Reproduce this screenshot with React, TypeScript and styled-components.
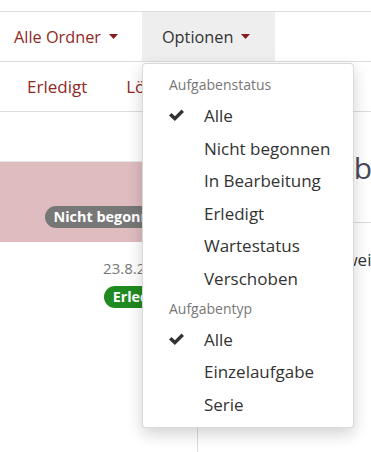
import React from 'react';
import styled, { createGlobalStyle } from 'styled-components';

const GlobalStyle = createGlobalStyle`
  html, body {
    margin: 0;
    padding: 0;
    background: #fff;
  }
  body {
    font-family: "Open Sans", "Noto Sans", sans-serif;
    color: #333;
    overflow: hidden;
  }
`;

const statusItems = ['Alle', 'Nicht begonnen', 'In Bearbeitung', 'Erledigt', 'Wartestatus', 'Verschoben'];
const typeItems = ['Alle', 'Einzelaufgabe', 'Serie'];

const Check = () => (
  <svg width="15" height="12" viewBox="0 0 15 12">
    <polygon points="0,6.6 2.5,4.1 5.9,7.3 12.5,0.6 15,3.1 5.9,12" fill="#333" />
  </svg>
);

const Caret = () => (
  <svg width="9" height="5" viewBox="0 0 9 5">
    <polygon points="0,0 9,0 4.5,5" fill="#8b1a1a" />
  </svg>
);

const App = () => {
  return (
    <Page>
      <GlobalStyle />
      <TopStrip />
      <Nav>
        <NavItem $first>
          <NavLabel $tone="red">Alle Ordner</NavLabel>
          <Caret />
        </NavItem>
        <NavItem $active>
          <NavLabel>Optionen</NavLabel>
          <Caret />
          <Menu>
            <MenuHeader>Aufgabenstatus</MenuHeader>
            {statusItems.map((s, i) => (
              <MenuItem key={s}>
                <CheckSlot>{i === 0 && <Check />}</CheckSlot>
                {s}
              </MenuItem>
            ))}
            <MenuHeader>Aufgabentyp</MenuHeader>
            {typeItems.map((s, i) => (
              <MenuItem key={s}>
                <CheckSlot>{i === 0 && <Check />}</CheckSlot>
                {s}
              </MenuItem>
            ))}
          </Menu>
        </NavItem>
      </Nav>
      <Tabs>
        <Tab>Erledigt</Tab>
        <Tab>Löschen</Tab>
      </Tabs>
      <Main>
        <List>
          <ListSearch />
          <ListRow $selected>
            <Badge $tone="gray">Nicht begonnen</Badge>
          </ListRow>
          <ListRow>
            <DateText>23.8.2023</DateText>
            <Badge $tone="green">Erledigt</Badge>
          </ListRow>
        </List>
        <Detail>
          <DetailHead>Eine Aufgabe auswählen</DetailHead>
          <DetailText>Hier erhalten Sie weitere Details zur Aufgabe.</DetailText>
        </Detail>
      </Main>
    </Page>
  );
};

const Page = styled.div`
  width: 371px;
  height: 452px;
  overflow: hidden;
`;

const TopStrip = styled.div`
  height: 11px;
  border-bottom: 1px solid #ddd;
`;

const Nav = styled.div`
  display: flex;
  height: 49px;
  border-bottom: 1px solid #ddd;
`;

const NavItem = styled.div<{ $active?: boolean; $first?: boolean }>`
  position: relative;
  display: flex;
  align-items: center;
  gap: 8px;
  padding: 0 ${(p) => (p.$first ? '24px' : '25px')} 0 20px;
  margin-left: ${(p) => (p.$first ? '-6px' : '0')};
  background: ${(p) => (p.$active ? '#eee' : 'transparent')};
`;

const NavLabel = styled.span<{ $tone?: 'red' }>`
  font-size: 16.3px;
  color: ${(p) => (p.$tone === 'red' ? '#8f2a1f' : '#333')};
`;

const Menu = styled.div`
  position: absolute;
  top: 51px;
  left: 0;
  width: 210px;
  padding: 8px 0 6px;
  background: #fff;
  border: 1px solid rgba(0, 0, 0, 0.15);
  border-radius: 4px;
  box-shadow: 0 6px 16px rgba(0, 0, 0, 0.18);
  z-index: 10;
`;

const MenuHeader = styled.div`
  padding: 3px 26px 5px;
  font-size: 14px;
  line-height: 20px;
  color: #777;
`;

const MenuItem = styled.div`
  display: flex;
  align-items: center;
  padding: 0 20px 0 26px;
  font-size: 17px;
  line-height: 32.6px;
  color: #333;
  white-space: nowrap;
`;

const CheckSlot = styled.span`
  display: inline-flex;
  width: 35px;
  margin-top: -2px;
`;

const Tabs = styled.div`
  display: flex;
  align-items: center;
  gap: 39px;
  height: 49px;
  padding-left: 27px;
  border-bottom: 1px solid #ddd;
`;

const Tab = styled.span`
  font-size: 17px;
  color: #8f2a1f;
`;

const Main = styled.div`
  display: grid;
  grid-template-columns: 198px 1fr;
  height: 340px;
`;

const List = styled.div`
  border-right: 1px solid #ddd;
`;

const ListSearch = styled.div`
  height: 49px;
  border-bottom: 1px solid #e8e8e8;
`;

const ListRow = styled.div<{ $selected?: boolean }>`
  display: flex;
  flex-direction: column;
  align-items: flex-end;
  justify-content: flex-end;
  gap: 9px;
  height: 66px;
  padding: 0 20px 14px;
  background: ${(p) => (p.$selected ? '#dfbcbf' : '#fff')};
`;

const DateText = styled.span`
  margin-right: 6px;
  font-size: 15px;
  line-height: 18px;
  color: #777;
`;

const Badge = styled.span<{ $tone: 'gray' | 'green' }>`
  display: inline-block;
  padding: 0 9px;
  border-radius: 11px;
  font-size: 14.4px;
  line-height: 22px;
  font-weight: 700;
  color: #fff;
  background: ${(p) => (p.$tone === 'green' ? '#1f8a1f' : '#777')};
`;

const Detail = styled.div`
  display: flex;
  flex-direction: column;
`;

const DetailHead = styled.div`
  height: 110px;
  display: flex;
  align-items: center;
  padding: 0 8px;
  font-size: 30px;
  color: #4a4a5a;
  white-space: nowrap;
  border-bottom: 1px solid #ddd;
`;

const DetailText = styled.div`
  padding: 25px 10px;
  font-size: 17px;
  color: #333;
  white-space: nowrap;
`;

export default App;
